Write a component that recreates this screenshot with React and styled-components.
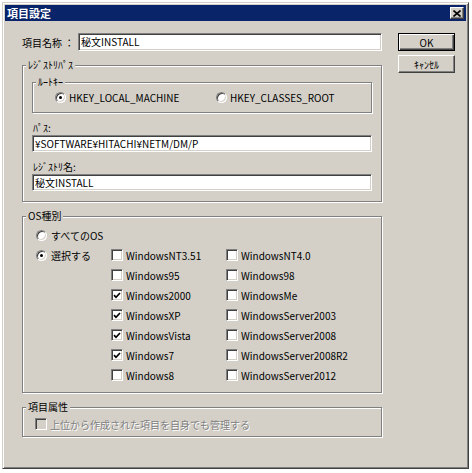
import styled, { createGlobalStyle } from 'styled-components';

const FACE = '#D4D0C8';

const GlobalStyle = createGlobalStyle`
  html, body { margin: 0; padding: 0; background: #fff; }
  body {
    font-family: "Noto Sans CJK JP", "Liberation Sans", sans-serif;
    font-size: 10px;
    color: #000;
  }
`;

const Window = styled.div`
  margin: 2px;
  width: 467px;
  height: 467px;
  box-sizing: border-box;
  background: ${FACE};
  border: 1px solid;
  border-color: ${FACE} #404040 #404040 ${FACE};
  box-shadow: inset 1px 1px 0 #fff, inset -1px -1px 0 #808080;
  padding: 2px;
  display: flex;
  flex-direction: column;
`;

const TitleBar = styled.div`
  height: 16px;
  background: #0a246a;
  color: #fff;
  font-size: 11px;
  font-weight: bold;
  display: flex;
  align-items: center;
  justify-content: space-between;
  padding: 0 2px 0 2px;
`;

const CloseButton = styled.span`
  width: 14px;
  height: 12px;
  box-sizing: border-box;
  background: ${FACE};
  border: 1px solid;
  border-color: #fff #404040 #404040 #fff;
  box-shadow: inset -1px -1px 0 #808080;
  display: flex;
  align-items: center;
  justify-content: center;
`;

const Body = styled.div`
  display: flex;
  gap: 16px;
  padding: 12px 0 0 17px;
`;

const LeftCol = styled.div`
  width: 360px;
  display: flex;
  flex-direction: column;
`;

const ButtonCol = styled.div`
  display: flex;
  flex-direction: column;
  gap: 4px;
`;

const Button = styled.div`
  width: 57px;
  height: 18px;
  box-sizing: border-box;
  display: flex;
  align-items: center;
  justify-content: center;
  background: ${FACE};
  border: 1px solid;
  border-color: ${(p) => (p.$default ? '#000' : '#fff #404040 #404040 #fff')};
  box-shadow: ${(p) =>
    p.$default
      ? 'inset 1px 1px 0 #fff, inset -1px -1px 0 #404040, inset -2px -2px 0 #808080'
      : 'inset -1px -1px 0 #808080'};
`;

const NameRow = styled.div`
  display: flex;
  align-items: center;
`;

const NameLabel = styled.span`
  width: 56px;
  white-space: nowrap;
`;

const Field = styled.div`
  flex: 1;
  height: ${(p) => p.$h || 17}px;
  box-sizing: border-box;
  background: #fff;
  border: 1px solid;
  border-color: #808080 #fff #fff #808080;
  box-shadow: inset 1px 1px 0 #404040, inset -1px -1px 0 ${FACE};
  padding: 0 2px;
  line-height: ${(p) => (p.$h || 17) - 2}px;
  white-space: nowrap;
  overflow: hidden;
`;

const Group = styled.div`
  position: relative;
  margin-top: ${(p) => p.$mt ?? 14}px;
  border: 1px solid #808080;
  box-shadow: inset 1px 1px 0 #fff, 1px 1px 0 #fff;
  padding: ${(p) => p.$pad};
`;

const Legend = styled.span`
  position: absolute;
  top: -7px;
  left: 3px;
  padding: 0 2px;
  line-height: 12px;
  background: ${FACE};
`;

const RootGroup = styled(Group)`
  height: 31px;
  box-sizing: border-box;
  display: grid;
  grid-template-columns: 161px auto;
  align-items: center;
`;

const FieldLabel = styled.div`
  line-height: 12px;
  margin: 9px 0 1px 1px;
`;

const FieldBlock = styled.div`
  display: flex;
`;

const OsGrid = styled.div`
  display: grid;
  grid-template-columns: 75px 115px 1fr;
  grid-auto-rows: 20px;
`;

const Item = styled.label`
  display: flex;
  align-items: center;
  gap: ${(p) => p.$gap || 3}px;
  white-space: nowrap;
  grid-column: ${(p) => p.$col || 'auto'};
  color: ${(p) => (p.$disabled ? '#808080' : '#000')};
  text-shadow: ${(p) => (p.$disabled ? '1px 1px 0 #fff' : 'none')};
`;

const Radio = styled.span`
  position: relative;
  width: 11px;
  height: 11px;
  box-sizing: border-box;
  border-radius: 50%;
  background: #fff;
  border: 1px solid;
  border-color: #808080 #fff #fff #808080;
  box-shadow: inset 1px 1px 0 #404040, inset -1px -1px 0 ${FACE};
  &::after {
    content: '';
    display: ${(p) => (p.$checked ? 'block' : 'none')};
    position: absolute;
    left: 3px;
    top: 3px;
    width: 3px;
    height: 3px;
    border-radius: 50%;
    background: #000;
  }
`;

const Box = styled.span`
  width: 12px;
  height: 12px;
  flex: none;
  box-sizing: border-box;
  background: ${(p) => (p.$disabled ? FACE : '#fff')};
  border: 1px solid;
  border-color: #808080 #fff #fff #808080;
  box-shadow: inset 1px 1px 0 #404040, inset -1px -1px 0 ${FACE};
  display: flex;
  align-items: center;
  justify-content: center;
`;

const Check = () => (
  <svg width="8" height="7" viewBox="0 0 8 7">
    <path d="M1 3.2 L3 5.3 L7 1" stroke="#000" strokeWidth="1.7" fill="none" />
  </svg>
);

const Checkbox = ({ label, checked, col, disabled }) => (
  <Item $col={col} $disabled={disabled}>
    <Box $disabled={disabled}>{checked && <Check />}</Box>
    {label}
  </Item>
);

const left = [
  ['WindowsNT3.51', false],
  ['Windows95', false],
  ['Windows2000', true],
  ['WindowsXP', true],
  ['WindowsVista', true],
  ['Windows7', true],
  ['Windows8', false],
];

const right = [
  'WindowsNT4.0',
  'Windows98',
  'WindowsMe',
  'WindowsServer2003',
  'WindowsServer2008',
  'WindowsServer2008R2',
  'WindowsServer2012',
];

export default function App() {
  return (
    <>
      <GlobalStyle />
      <Window>
        <TitleBar>
          <span>項目設定</span>
          <CloseButton>
            <svg width="8" height="7" viewBox="0 0 8 7">
              <path d="M0.5 0.5 L7.5 6.5 M7.5 0.5 L0.5 6.5" stroke="#000" strokeWidth="1.6" />
            </svg>
          </CloseButton>
        </TitleBar>
        <Body>
          <LeftCol>
            <NameRow>
              <NameLabel>項目名称 ：</NameLabel>
              <Field $h={18}>秘文INSTALL</Field>
            </NameRow>

            <Group $pad="16px 9px 10px 9px">
              <Legend>ﾚｼﾞｽﾄﾘﾊﾟｽ</Legend>
              <RootGroup $mt={0} $pad="0 0 0 22px">
                <Legend>ﾙｰﾄｷｰ</Legend>
                <Item>
                  <Radio $checked />
                  HKEY_LOCAL_MACHINE
                </Item>
                <Item>
                  <Radio />
                  HKEY_CLASSES_ROOT
                </Item>
              </RootGroup>
              <FieldLabel>ﾊﾟｽ:</FieldLabel>
              <FieldBlock>
                <Field>¥SOFTWARE¥HITACHI¥NETM/DM/P</Field>
              </FieldBlock>
              <FieldLabel>ﾚｼﾞｽﾄﾘ名:</FieldLabel>
              <FieldBlock>
                <Field>秘文INSTALL</Field>
              </FieldBlock>
            </Group>

            <Group $pad="8px 0 7px 13px">
              <Legend>OS種別</Legend>
              <OsGrid>
                <Item $col="1 / -1" $gap={4}>
                  <Radio />
                  すべてのOS
                </Item>
                <Item $col={1} $gap={4}>
                  <Radio $checked />
                  選択する
                </Item>
                {left.map(([name, checked], i) => [
                  <Checkbox key={name} label={name} checked={checked} col={2} />,
                  <Checkbox key={right[i]} label={right[i]} col={3} />,
                ])}
              </OsGrid>
            </Group>

            <Group $pad="6px 0 2px 12px">
              <Legend>項目属性</Legend>
              <OsGrid>
                <Checkbox label="上位から作成された項目を自身でも管理する" col="1 / -1" disabled />
              </OsGrid>
            </Group>
          </LeftCol>

          <ButtonCol>
            <Button $default>OK</Button>
            <Button>ｷｬﾝｾﾙ</Button>
          </ButtonCol>
        </Body>
      </Window>
    </>
  );
}
